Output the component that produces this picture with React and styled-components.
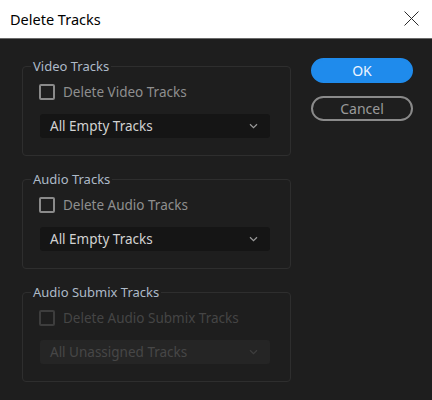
import React from "react";
import styled, { createGlobalStyle } from "styled-components";

const Global = createGlobalStyle`
  html, body { margin: 0; padding: 0; background: #1e1e1e; }
  * { box-sizing: border-box; }
`;

const Window = styled.div`
  width: 432px;
  height: 400px;
  display: flex;
  flex-direction: column;
  background: #1e1e1e;
  overflow: hidden;
`;

const TitleBar = styled.div`
  height: 39px;
  flex: none;
  background: #ffffff;
  border-bottom: 1px solid #6a6a6a;
  display: flex;
  align-items: center;
  justify-content: space-between;
  padding: 0 13px 1px 10px;
`;

const Title = styled.div`
  font-family: "Noto Sans", "Open Sans", sans-serif;
  font-size: 14.5px;
  color: #000;
`;

const Body = styled.div`
  flex: 1;
  display: flex;
  align-items: flex-start;
  padding: 19px 19px 0 22px;
  gap: 20px;
`;

const Column = styled.div`
  width: 269px;
  display: flex;
  flex-direction: column;
  gap: 15px;
`;

const Group = styled.fieldset`
  margin: 0;
  padding: 10px 20px 17px 16px;
  border: 1px solid #2e2e2e;
  border-radius: 4px;
  display: flex;
  flex-direction: column;
  gap: 14px;
  min-height: 0;
`;

const Legend = styled.legend`
  margin-left: -8px;
  padding: 0 2px;
  font-family: "Noto Sans", sans-serif;
  font-size: 13px;
  line-height: 16px;
  color: #adbac8;
`;

const CheckRow = styled.label`
  display: flex;
  align-items: center;
  gap: 8px;
  font-family: "Noto Sans", sans-serif;
  font-size: 13.5px;
  line-height: 16px;
  color: ${(p) => (p.$disabled ? "#454545" : "#8f8f8f")};
`;

const Box = styled.span`
  width: 16px;
  height: 16px;
  border: 2px solid ${(p) => (p.$disabled ? "#3d3d3d" : "#8a8a8a")};
  border-radius: 2px;
  flex: none;
`;

const Select = styled.div`
  height: 24px;
  width: 230px;
  margin-left: 1px;
  border-radius: 3px;
  background: ${(p) => (p.$disabled ? "#252525" : "#151515")};
  display: flex;
  align-items: center;
  justify-content: space-between;
  padding: 0 12px 0 10px;
  font-family: "Noto Sans", sans-serif;
  font-size: 13.5px;
  color: ${(p) => (p.$disabled ? "#474747" : "#d2d2d2")};
`;

const Buttons = styled.div`
  display: flex;
  flex-direction: column;
  gap: 13px;
`;

const Button = styled.div`
  width: 102px;
  height: 25px;
  border-radius: 13px;
  display: flex;
  align-items: center;
  justify-content: center;
  font-family: "Noto Sans", sans-serif;
  font-size: 14px;
  background: ${(p) => (p.$primary ? "#1f8bec" : "transparent")};
  border: 2px solid ${(p) => (p.$primary ? "#1f8bec" : "#8a8a8a")};
  color: ${(p) => (p.$primary ? "#eef5ff" : "#9a9a9a")};
`;

const Chevron = ({ color }) => (
  <svg width="9" height="6" viewBox="0 0 9 6">
    <path d="M1 1.2 L4.5 4.6 L8 1.2" fill="none" stroke={color} strokeWidth="1.2" />
  </svg>
);

const Close = () => (
  <svg width="15" height="15" viewBox="0 0 15 15">
    <path d="M0.5 0.5 L14.5 14.5 M14.5 0.5 L0.5 14.5" stroke="#2b2b2b" strokeWidth="1" />
  </svg>
);

const groups = [
  { title: "Video Tracks", check: "Delete Video Tracks", sel: "All Empty Tracks" },
  { title: "Audio Tracks", check: "Delete Audio Tracks", sel: "All Empty Tracks" },
  { title: "Audio Submix Tracks", check: "Delete Audio Submix Tracks", sel: "All Unassigned Tracks", disabled: true },
];

export default function App() {
  return (
    <>
      <Global />
      <Window>
        <TitleBar>
          <Title>Delete Tracks</Title>
          <Close />
        </TitleBar>
        <Body>
          <Column>
            {groups.map((g) => (
              <Group key={g.title}>
                <Legend>{g.title}</Legend>
                <CheckRow $disabled={g.disabled}>
                  <Box $disabled={g.disabled} />
                  {g.check}
                </CheckRow>
                <Select $disabled={g.disabled}>
                  <span>{g.sel}</span>
                  <Chevron color={g.disabled ? "#3e3e3e" : "#9a9a9a"} />
                </Select>
              </Group>
            ))}
          </Column>
          <Buttons>
            <Button $primary>OK</Button>
            <Button>Cancel</Button>
          </Buttons>
        </Body>
      </Window>
    </>
  );
}
